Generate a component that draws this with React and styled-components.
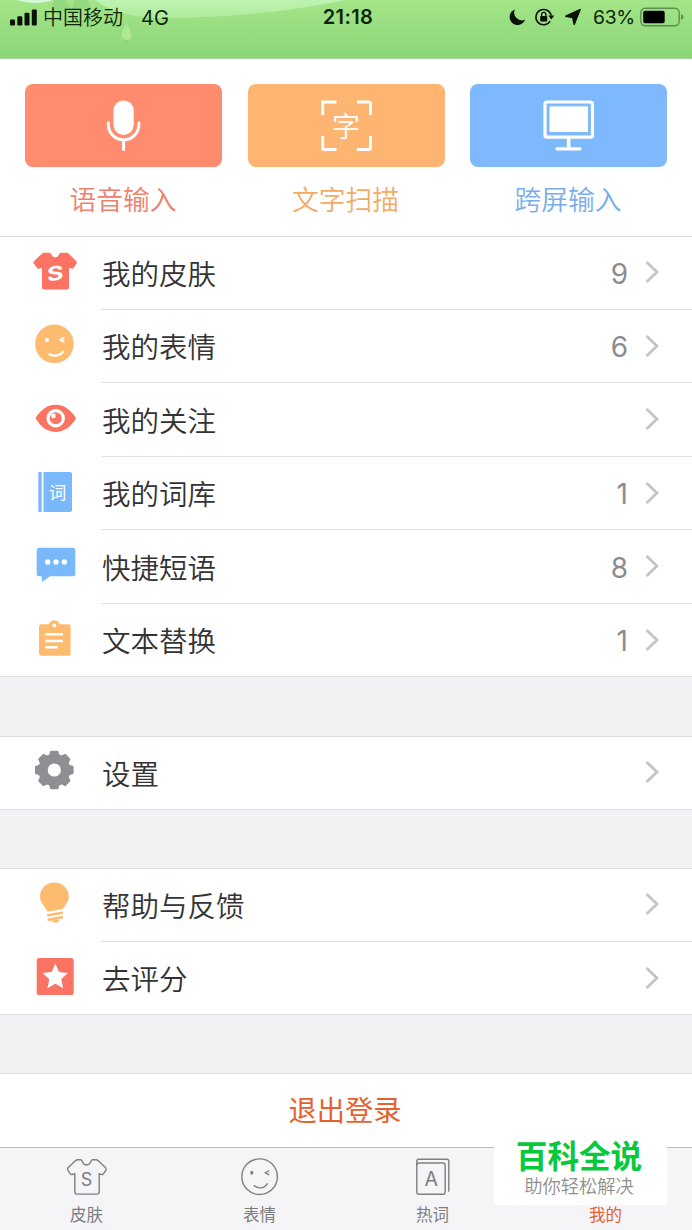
import styled, { createGlobalStyle } from "styled-components";

const GlobalStyle = createGlobalStyle`
  * {
    box-sizing: border-box;
  }

  body {
    margin: 0;
    background: #f2f2f4;
    color: #333333;
    font-family: Inter, "Noto Sans CJK SC", sans-serif;
  }

  svg {
    display: block;
    flex: none;
  }
`;

const Screen = styled.div`
  width: 692px;
  height: 1230px;
  display: flex;
  flex-direction: column;
  overflow: hidden;
`;

const StatusBar = styled.header`
  position: relative;
  height: 59px;
  flex: none;
  display: grid;
  grid-template-columns: 1fr auto 1fr;
  padding: 0 8px 24px 10px;
  background: linear-gradient(#a3e587, #8bd678);
  border-bottom: 1px solid #a5cf9b;
  color: #10240c;
  font-size: 20px;
`;

const Hills = styled.svg`
  position: absolute;
  top: 0;
  left: 0;
`;

const StatusGroup = styled.div`
  position: relative;
  display: flex;
  align-items: center;
  justify-content: ${({ $end }) => ($end ? "flex-end" : "flex-start")};
  height: 34px;
  white-space: nowrap;
`;

const Carrier = styled.span`
  margin: 0 18px 0 6px;
  padding-top: 3px;
  font-weight: 350;
  line-height: 33px;
`;

const Network = styled.span`
  padding-top: 1px;
  font-size: 20px;
`;

const Clock = styled.span`
  position: relative;
  padding-left: 2px;
  font-weight: 600;
  font-size: 20px;
  letter-spacing: 0.4px;
  line-height: 35px;
`;

const Percent = styled.span`
  margin: 0 5px 0 11px;
  font-size: 19.3px;
  letter-spacing: -0.3px;
`;

const Shortcuts = styled.section`
  height: 177px;
  flex: none;
  display: grid;
  grid-template-columns: repeat(3, 197px);
  justify-content: space-between;
  padding: 25px 25px 0;
  background: #ffffff;
`;

const Shortcut = styled.div`
  display: flex;
  flex-direction: column;
  align-items: center;
  color: ${({ $color }) => $color};
  font-size: 26.8px;
  font-weight: 350;
  line-height: 40px;
`;

const ShortcutTile = styled.div`
  width: 100%;
  height: 83px;
  display: flex;
  align-items: center;
  justify-content: center;
  margin-bottom: 13px;
  border-radius: 8px;
  background: ${({ $color }) => $color};
`;

const ShortcutLabel = styled.span`
  margin-right: 1px;
`;

const Group = styled.section`
  flex: none;
  height: ${({ $height }) => $height}px;
  display: flex;
  flex-direction: column;
  margin-bottom: ${({ $gap }) => $gap}px;
  border-top: 1px solid #dedee0;
  border-bottom: 1px solid #dedee0;
  background: #ffffff;
`;

const Row = styled.div`
  height: 73.5px;
  flex: none;
  display: flex;
  padding-left: 33px;

  &:first-child {
    height: 71.9px;
  }

  &:not(:first-child) > div {
    border-top: 1px solid #e3e3e5;
  }

  &:not(:first-child) > svg {
    margin-top: 14px;
  }
`;

const RowIcon = styled.svg`
  margin: 13px 24px 0 0;
`;

const RowBody = styled.div`
  flex: 1;
  display: flex;
  align-items: center;
  padding: 4px 33px 0 1px;
  font-size: 28.5px;
  font-weight: 350;
  line-height: 42px;
`;

const Count = styled.span`
  margin: -2px 17px 0 auto;
  color: #8c8c90;
  font-size: 28px;
  font-weight: 400;
`;

const Arrow = styled.svg`
  margin: -5px 0 0 ${({ $push }) => ($push ? "auto" : "0")};
`;

const Logout = styled.section`
  flex: none;
  height: 74px;
  border-top: 1px solid #dedee0;
  background: #ffffff;
  color: #e5612e;
  padding: 1px 2px 0 0;
  font-size: 28.3px;
  line-height: 73px;
  text-align: center;
`;

const TabBar = styled.nav`
  position: relative;
  flex: 1;
  display: grid;
  grid-template-columns: repeat(4, 1fr);
  border-top: 1px solid #bdbdbf;
  background: #f5f5f8;
`;

const Tab = styled.div`
  display: flex;
  flex-direction: column;
  align-items: center;
  padding-top: 7px;
  color: ${({ $active }) => ($active ? "#e5612e" : "#7d7d80")};
  font-size: 16.5px;
  line-height: 24px;

  svg {
    margin-bottom: 4px;
  }
`;

const Watermark = styled.div`
  position: absolute;
  right: 25px;
  bottom: 25px;
  width: 173px;
  height: 72px;
  display: flex;
  flex-direction: column;
  align-items: center;
  padding-right: 3px;
  background: #ffffff;
`;

const WatermarkTitle = styled.strong`
  margin-top: 6px;
  color: #08c83c;
  font-size: 31.6px;
  font-weight: 700;
  line-height: 36px;
`;

const WatermarkText = styled.span`
  color: #8f8f8f;
  font-size: 18.3px;
  font-weight: 350;
  line-height: 23px;
`;

const RED = "#fb7363";
const ORANGE = "#fdbb70";
const BLUE = "#79b8fb";
const GRAY = "#8e8e93";

const CJK = '"Noto Sans CJK SC", sans-serif';

// eight-toothed gear built around (21.3, 20)
const gearPath = Array.from({ length: 8 })
  .map((_, i) => {
    const points = [
      [-22.5, 15],
      [-15, 16],
      [-10, 18.8],
      [10, 18.8],
      [15, 16],
    ];
    return points
      .map(([deg, r]) => {
        const a = ((i * 45 + deg) * Math.PI) / 180;
        return `${(21.3 + r * Math.sin(a)).toFixed(2)},${(20 - r * Math.cos(a)).toFixed(2)}`;
      })
      .join(" ");
  })
  .join(" ");

const icons = {
  skin: (
    <>
      <path
        d="M11.5 2.7H16.5C17.5 2.7 18 3.6 18.6 4.8C19.5 6.7 20.6 7.4 22.2 7.4C23.8 7.4 25 6.7 25.9 4.8C26.5 3.6 27 2.7 28 2.7H33.2C34.4 2.7 35.2 3.1 36 3.9L43.3 11.3C44 12 44 12.8 43.5 13.6L40.8 17.8C40.2 18.7 39.3 19 38.3 18.6L36 17.7V37.2C36 38.7 35.3 39.4 33.8 39.4H11.2C9.7 39.4 9 38.7 9 37.2V17.7L6.4 18.6C5.3 19 4.4 18.8 3.8 17.8L.8 13.6C.2 12.8.2 12 .9 11.3L8.6 3.9C9.4 3.1 10.3 2.7 11.5 2.7Z"
        fill={RED}
      />
      <text x="0" y="0" transform="translate(22.2 30.4) rotate(-8) skewX(-8) scale(1.3 1)" textAnchor="middle" fontSize="19.5" fontWeight="700" fill="#fff">
        S
      </text>
    </>
  ),
  face: (
    <>
      <circle cx="21.4" cy="20.8" r="19.3" fill={ORANGE} />
      <circle cx="14" cy="17" r="2.1" fill="#fff" />
      <path d="M31.4 14.4L27.4 16.7L31.4 19" fill="none" stroke="#fff" strokeWidth="1.7" />
      <path d="M16.5 31.2C21.5 33.8 27.5 32.6 30.4 28.6" fill="none" stroke="#fff" strokeWidth="2.2" strokeLinecap="round" />
    </>
  ),
  eye: (
    <>
      <path d="M3.2 21.1C8.3 13.2 15 8.7 22.7 8.7S37.2 13.2 42.4 21.1C43 22 43 22.7 42.4 23.6C37.2 31.5 30.4 36 22.7 36S8.3 31.5 3.2 23.6C2.6 22.7 2.6 22 3.2 21.1Z" fill={RED} />
      <circle cx="22.7" cy="22.3" r="9.2" fill="#fff" />
      <circle cx="22.7" cy="22.3" r="6" fill={RED} />
      <circle cx="20.4" cy="20" r="2.4" fill="#fff" />
    </>
  ),
  book: (
    <>
      <path d="M6.2 2H8.7V42H6.2Q5.3 42 5.3 41V3Q5.3 2 6.2 2ZM10.5 2H37Q39 2 39 4V40Q39 42 37 42H10.5Z" fill={BLUE} />
      <text x="24.6" y="29" textAnchor="middle" fontSize="17.5" fontFamily={CJK} fill="#fff">
        词
      </text>
    </>
  ),
  bubble: (
    <>
      <path d="M6.2 4.7H39.8Q42.3 4.7 42.3 7.2V30.8Q42.3 33.3 39.8 33.3H17L10.2 38.2Q9 38.8 8.9 37.4L8.7 33.3H6.2Q3.7 33.3 3.7 30.8V7.2Q3.7 4.7 6.2 4.7Z" fill={BLUE} />
      <circle cx="14.7" cy="19" r="2.7" fill="#fff" />
      <circle cx="23" cy="19" r="2.7" fill="#fff" />
      <circle cx="31.4" cy="19" r="2.7" fill="#fff" />
    </>
  ),
  clipboard: (
    <>
      <rect x="6" y="7.3" width="31.6" height="31.4" rx="2.5" fill={ORANGE} />
      <circle cx="21.4" cy="8.8" r="5.6" fill={ORANGE} />
      <circle cx="21.4" cy="8.5" r="1.9" fill="#fff" />
      <path d="M12.3 17.2H30M12.3 24H30M12.3 30.2H24.7" stroke="#fff" strokeWidth="2.4" />
    </>
  ),
  gear: (
    <>
      <polygon points={gearPath} fill={GRAY} stroke={GRAY} strokeWidth="1.6" strokeLinejoin="round" />
      <circle cx="21.3" cy="20" r="6.6" fill="#fff" />
    </>
  ),
  bulb: (
    <>
      <path d="M21.4 .4A14.4 14.4 0 0 1 35.8 14.8C35.8 19.5 33 22 31.2 24.8C30.6 25.8 30.2 26.6 29.4 26.9L15.7 29.6C14.2 29.8 13.9 29 13.2 27.6C11.2 23.2 7 20.4 7 14.8A14.4 14.4 0 0 1 21.4 .4Z" fill={ORANGE} />
      <path d="M15.2 33.2L29 30.7M15.6 37.7L29 35.2" stroke={ORANGE} strokeWidth="2.5" strokeLinecap="round" />
      <path d="M18.5 38.5L26.5 37.2Q26 40.7 22.6 40.7Q19.8 40.7 18.5 38.5Z" fill={ORANGE} />
    </>
  ),
  star: (
    <>
      <rect x="3.7" y="3" width="37" height="37" rx="2.5" fill={RED} />
      <path d="M22.3 8.6L26 17.1L35 18.1L28.3 24.3L30.2 33.3L22.3 28.7L14.4 33.3L16.3 24.3L9.6 18.1L18.6 17.1Z" fill="#fff" />
    </>
  ),
};

const shortcuts = [
  {
    label: "语音输入",
    tile: "#ff8c6f",
    text: "#f0806e",
    icon: (
      <>
        <rect x="15.5" y=".4" width="20.2" height="34.6" rx="10.1" fill="#fff" />
        <path d="M10.3 22.8V24.6A15.2 15.2 0 0 0 40.9 24.6V22.8M25.6 40V49.6" fill="none" stroke="#fff" strokeWidth="3" strokeLinecap="round" />
      </>
    ),
  },
  {
    label: "文字扫描",
    tile: "#feb571",
    text: "#f3ab66",
    icon: (
      <>
        <path d="M1.7 15V2H15.5M36 2H47.5Q49.5 2 49.5 4V15M49.5 36V47.5Q49.5 49.5 47.5 49.5H36M15.5 49.5H3.7Q1.7 49.5 1.7 47.5V36" fill="none" stroke="#fff" strokeWidth="3" />
        <text x="25" y="36.6" textAnchor="middle" fontSize="28" fontWeight="350" fontFamily={CJK} fill="#fff">
          字
        </text>
      </>
    ),
  },
  {
    label: "跨屏输入",
    tile: "#7eb9fd",
    text: "#7aaeea",
    icon: (
      <>
        <rect x="2" y="2" width="47.5" height="35.2" rx="2" fill="none" stroke="#fff" strokeWidth="3.2" />
        <rect x="6.5" y="6.4" width="38.5" height="25.6" fill="#fff" />
        <path d="M25.6 38V48" stroke="#fff" strokeWidth="3.6" />
        <path d="M14 48.8H37" stroke="#fff" strokeWidth="3.2" strokeLinecap="round" />
      </>
    ),
  },
];

const groups = [
  {
    height: 441,
    gap: 59,
    rows: [
      { icon: "skin", label: "我的皮肤", count: 9 },
      { icon: "face", label: "我的表情", count: 6 },
      { icon: "eye", label: "我的关注" },
      { icon: "book", label: "我的词库", count: 1 },
      { icon: "bubble", label: "快捷短语", count: 8 },
      { icon: "clipboard", label: "文本替换", count: 1 },
    ],
  },
  { height: 74, gap: 58, rows: [{ icon: "gear", label: "设置" }] },
  {
    height: 147,
    gap: 58,
    rows: [
      { icon: "bulb", label: "帮助与反馈" },
      { icon: "star", label: "去评分" },
    ],
  },
];

const tabs = [
  {
    label: "皮肤",
    icon: (
      <>
        <path d="M13 4.8H15.8C17 4.8 16.9 5.8 17.5 7C18.4 9 19.8 10 21.6 10S24.8 9 25.7 7C26.3 5.8 26.3 4.8 27.5 4.8H30.7C32 4.8 32.8 5.2 33.6 6L40.6 12.8C41.4 13.6 41.4 14.4 40.9 15.2L38.6 18.6C38 19.6 37.2 19.8 36.2 19.4L34.2 18.7V37C34.2 38.4 33.5 39.1 32.1 39.1H11.9C10.5 39.1 9.8 38.4 9.8 37V18.7L7.6 19.4C6.5 19.8 5.7 19.6 5.1 18.6L2.8 15.2C2.3 14.4 2.3 13.6 3.1 12.8L10.1 6C10.9 5.2 11.7 4.8 13 4.8Z" />
        <text x="21.6" y="31.2" textAnchor="middle" fontSize="18" fill="#7d7d80" stroke="none">
          S
        </text>
      </>
    ),
  },
  {
    label: "表情",
    icon: (
      <>
        <circle cx="21.6" cy="21.7" r="17.8" />
        <ellipse cx="13.8" cy="17.7" rx="1.5" ry="2" fill="#7d7d80" stroke="none" />
        <path d="M31.3 15.5L27.3 17.7L31.3 19.9M15.8 30.2C20 34.4 26.5 33.6 29.6 28.4" />
      </>
    ),
  },
  {
    label: "热词",
    icon: (
      <>
        <rect x="5.8" y="8" width="28.4" height="31.3" rx="2.2" />
        <path d="M5.8 10V6.2Q5.8 4.2 7.8 4.2H35.8Q37.8 4.2 37.8 6.2V36.8" />
        <text x="20.2" y="31.2" textAnchor="middle" fontSize="19.5" fontWeight="400" fill="#7d7d80" stroke="none">
          A
        </text>
      </>
    ),
  },
  { label: "我的", active: true, icon: null },
];

function StatusIcons() {
  return (
    <svg width="76" height="20" viewBox="0 0 76 20">
      <path d="M9 2.4A8 8 0 1 0 19.2 12.5A7.6 7.6 0 0 1 9 2.4Z" fill="#071305" />
      <path d="M44.2 14.2A7.7 7.7 0 1 1 45.2 8.7" fill="none" stroke="#071305" strokeWidth="1.5" />
      <path d="M42.4 8.4H48.4L45.4 12.4Z" fill="#071305" />
      <rect x="34.2" y="9" width="7" height="5.6" rx=".8" fill="#071305" />
      <path d="M35.6 9.2V7.4A2.1 2.1 0 0 1 39.8 7.4V9.2" fill="none" stroke="#071305" strokeWidth="1.3" />
      <path d="M74 2.7L68.2 17.2L66.8 10.4L59.8 9.2Z" fill="#071305" stroke="#071305" strokeWidth="1.6" strokeLinejoin="round" />
    </svg>
  );
}

function MenuRow({ icon, label, count }) {
  return (
    <Row>
      <RowIcon width="44" height="44" viewBox="0 0 44 44">
        {icons[icon]}
      </RowIcon>
      <RowBody>
        {label}
        {count !== undefined && <Count>{count}</Count>}
        <Arrow $push={count === undefined} width="14" height="24" viewBox="0 0 14 24">
          <path d="M1.5 2L12 12L1.5 22" fill="none" stroke="#c4c4c9" strokeWidth="2.9" />
        </Arrow>
      </RowBody>
    </Row>
  );
}

export default function App() {
  return (
    <>
      <GlobalStyle />
      <Screen>
        <StatusBar>
          <Hills width="692" height="58" viewBox="0 0 692 58">
            <defs>
              <linearGradient id="hill" x1="0" x2="0" y1="0" y2="1">
                <stop offset="0" stopColor="#bdf3b0" />
                <stop offset="1" stopColor="#b0eb9e" />
              </linearGradient>
            </defs>
            <path d="M95 0H345C290 12 225 18 165 18C130 18 108 10 95 0Z" fill="url(#hill)" />
            <path d="M16 0H54Q36 6 16 0Z" fill="#d4f8dc" />
            <path d="M54 0H66L72 12H51Z M74 0H87L92 9H72Z" fill="#93d982" />
            <path d="M126.5 23C132 31 134 40 126.5 40S121 31 126.5 23Z" fill="#aee98d" />
            <path d="M126.5 40V44" stroke="#8fcb76" strokeWidth="1.5" />
          </Hills>
          <StatusGroup>
            <svg width="27" height="17" viewBox="0 0 27 17">
              <rect x="0" y="10.5" width="5" height="6" rx="1.2" fill="#071305" />
              <rect x="7.3" y="7.2" width="5" height="9.3" rx="1.2" fill="#071305" />
              <rect x="14.5" y="3.8" width="5" height="12.7" rx="1.2" fill="#071305" />
              <rect x="21.8" y=".4" width="5" height="16.1" rx="1.2" fill="#071305" />
            </svg>
            <Carrier>中国移动</Carrier>
            <Network>4G</Network>
          </StatusGroup>
          <Clock>21:18</Clock>
          <StatusGroup $end>
            <StatusIcons />
            <Percent>63%</Percent>
            <svg width="44" height="20" viewBox="0 0 44 20">
              <rect x=".8" y="1.3" width="38.4" height="17.4" rx="4.5" fill="none" stroke="#5f8d52" strokeWidth="1.4" />
              <rect x="3.2" y="3.8" width="21.5" height="12.4" rx="2" fill="#000" />
              <path d="M41 7Q43.5 8 43.5 10T41 13Z" fill="#5f8d52" />
            </svg>
          </StatusGroup>
        </StatusBar>

        <Shortcuts>
          {shortcuts.map(({ label, tile, text, icon }) => (
            <Shortcut key={label} $color={text}>
              <ShortcutTile $color={tile}>
                <svg width="51" height="51" viewBox="0 0 51 51">
                  {icon}
                </svg>
              </ShortcutTile>
              <ShortcutLabel>{label}</ShortcutLabel>
            </Shortcut>
          ))}
        </Shortcuts>

        {groups.map(({ height, gap, rows }) => (
          <Group key={rows[0].label} $height={height} $gap={gap}>
            {rows.map((row) => (
              <MenuRow key={row.label} {...row} />
            ))}
          </Group>
        ))}

        <Logout>退出登录</Logout>

        <TabBar>
          {tabs.map(({ label, icon, active }) => (
            <Tab key={label} $active={active}>
              <svg width="44" height="44" viewBox="0 0 44 44" fill="none" stroke="#808083" strokeWidth="1.4">
                {icon}
              </svg>
              {label}
            </Tab>
          ))}
          <Watermark>
            <WatermarkTitle>百科全说</WatermarkTitle>
            <WatermarkText>助你轻松解决</WatermarkText>
          </Watermark>
        </TabBar>
      </Screen>
    </>
  );
}
